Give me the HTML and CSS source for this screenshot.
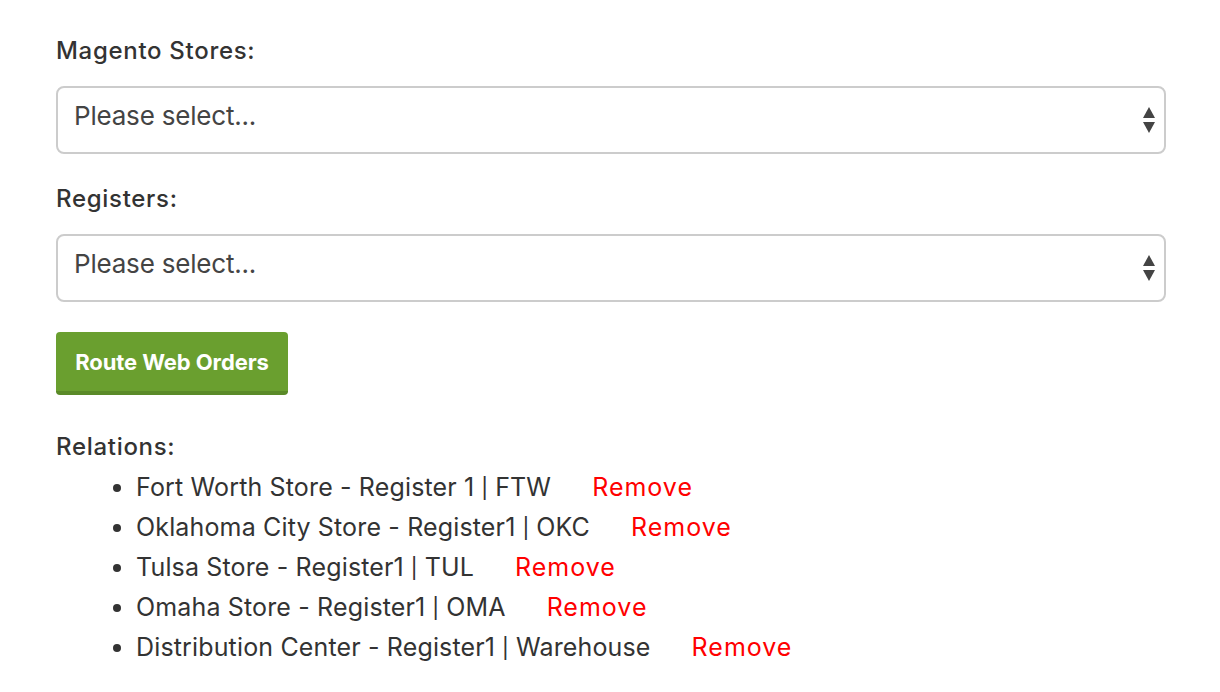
FILE: index.html
```html
<!DOCTYPE html>
<html>
<head>
<meta charset="utf-8">
<link rel="stylesheet" href="styles.css">
</head>
<body>
<div class="page">
  <label class="field-label">Magento Stores:</label>
  <div class="select-box">
    <span class="select-text">Please select...</span>
    <svg class="select-arrows" width="14" height="28" viewBox="0 0 14 28"><path d="M7 1 L13 12 L1 12 Z" fill="#444"/><path d="M1 16 L13 16 L7 27 Z" fill="#444"/></svg>
  </div>
  <label class="field-label">Registers:</label>
  <div class="select-box">
    <span class="select-text">Please select...</span>
    <svg class="select-arrows" width="14" height="28" viewBox="0 0 14 28"><path d="M7 1 L13 12 L1 12 Z" fill="#444"/><path d="M1 16 L13 16 L7 27 Z" fill="#444"/></svg>
  </div>
  <button class="btn-route">Route Web Orders</button>
  <div class="relations-label">Relations:</div>
  <ul class="relations">
    <li>Fort Worth Store - Register 1 <span class="sep">|</span> FTW<a class="remove" href="#">Remove</a></li>
    <li>Oklahoma City Store - Register1 <span class="sep">|</span> OKC<a class="remove" href="#">Remove</a></li>
    <li>Tulsa Store - Register1 <span class="sep">|</span> TUL<a class="remove" href="#">Remove</a></li>
    <li>Omaha Store - Register1 <span class="sep">|</span> OMA<a class="remove" href="#">Remove</a></li>
    <li>Distribution Center - Register1 <span class="sep">|</span> Warehouse<a class="remove" href="#">Remove</a></li>
  </ul>
</div>
</body>
</html>
```
FILE: styles.css
```css
html, body {
  margin: 0;
  padding: 0;
  background: #fff;
}
body {
  font-family: "Inter", "Lato", "Liberation Sans", sans-serif;
  color: #333;
}
.page {
  padding: 36px 54px 0 56px;
  display: flex;
  flex-direction: column;
  align-items: flex-start;
}
.field-label,
.relations-label {
  display: block;
  font-size: 24px;
  line-height: 30px;
  font-weight: 500;
  letter-spacing: 0.7px;
  color: #333;
}
.field-label {
  margin-bottom: 20px;
}
.select-box {
  align-self: stretch;
  box-sizing: border-box;
  height: 68px;
  border: 2px solid #ccc;
  border-radius: 8px;
  display: flex;
  align-items: center;
  justify-content: space-between;
  padding: 0 8px 0 16px;
  margin-bottom: 30px;
}
.select-text {
  font-size: 26px;
  letter-spacing: -0.2px;
  color: #444;
  margin-top: -10px;
}
.select-arrows {
  display: block;
}
.btn-route {
  font-family: inherit;
  font-size: 22px;
  font-weight: 700;
  color: #fff;
  background: #6a9f2f;
  border: none;
  border-bottom: 4px solid #5a8a28;
  border-radius: 4px;
  height: 63px;
  width: 232px;
  padding: 0;
  letter-spacing: -0.1px;
}
.relations-label {
  margin-top: 37px;
}
.relations {
  margin: 5px 0 0 0;
  padding: 0 0 0 80px;
  list-style: disc;
}
.relations li {
  font-size: 25px;
  line-height: 40px;
  height: 40px;
  letter-spacing: 0.15px;
  color: #333;
}
.sep {
  font-family: "Lato", sans-serif;
  line-height: 0;
}
.remove {
  color: #ff0000;
  text-decoration: none;
  margin-left: 41px;
  letter-spacing: 1px;
}
```
